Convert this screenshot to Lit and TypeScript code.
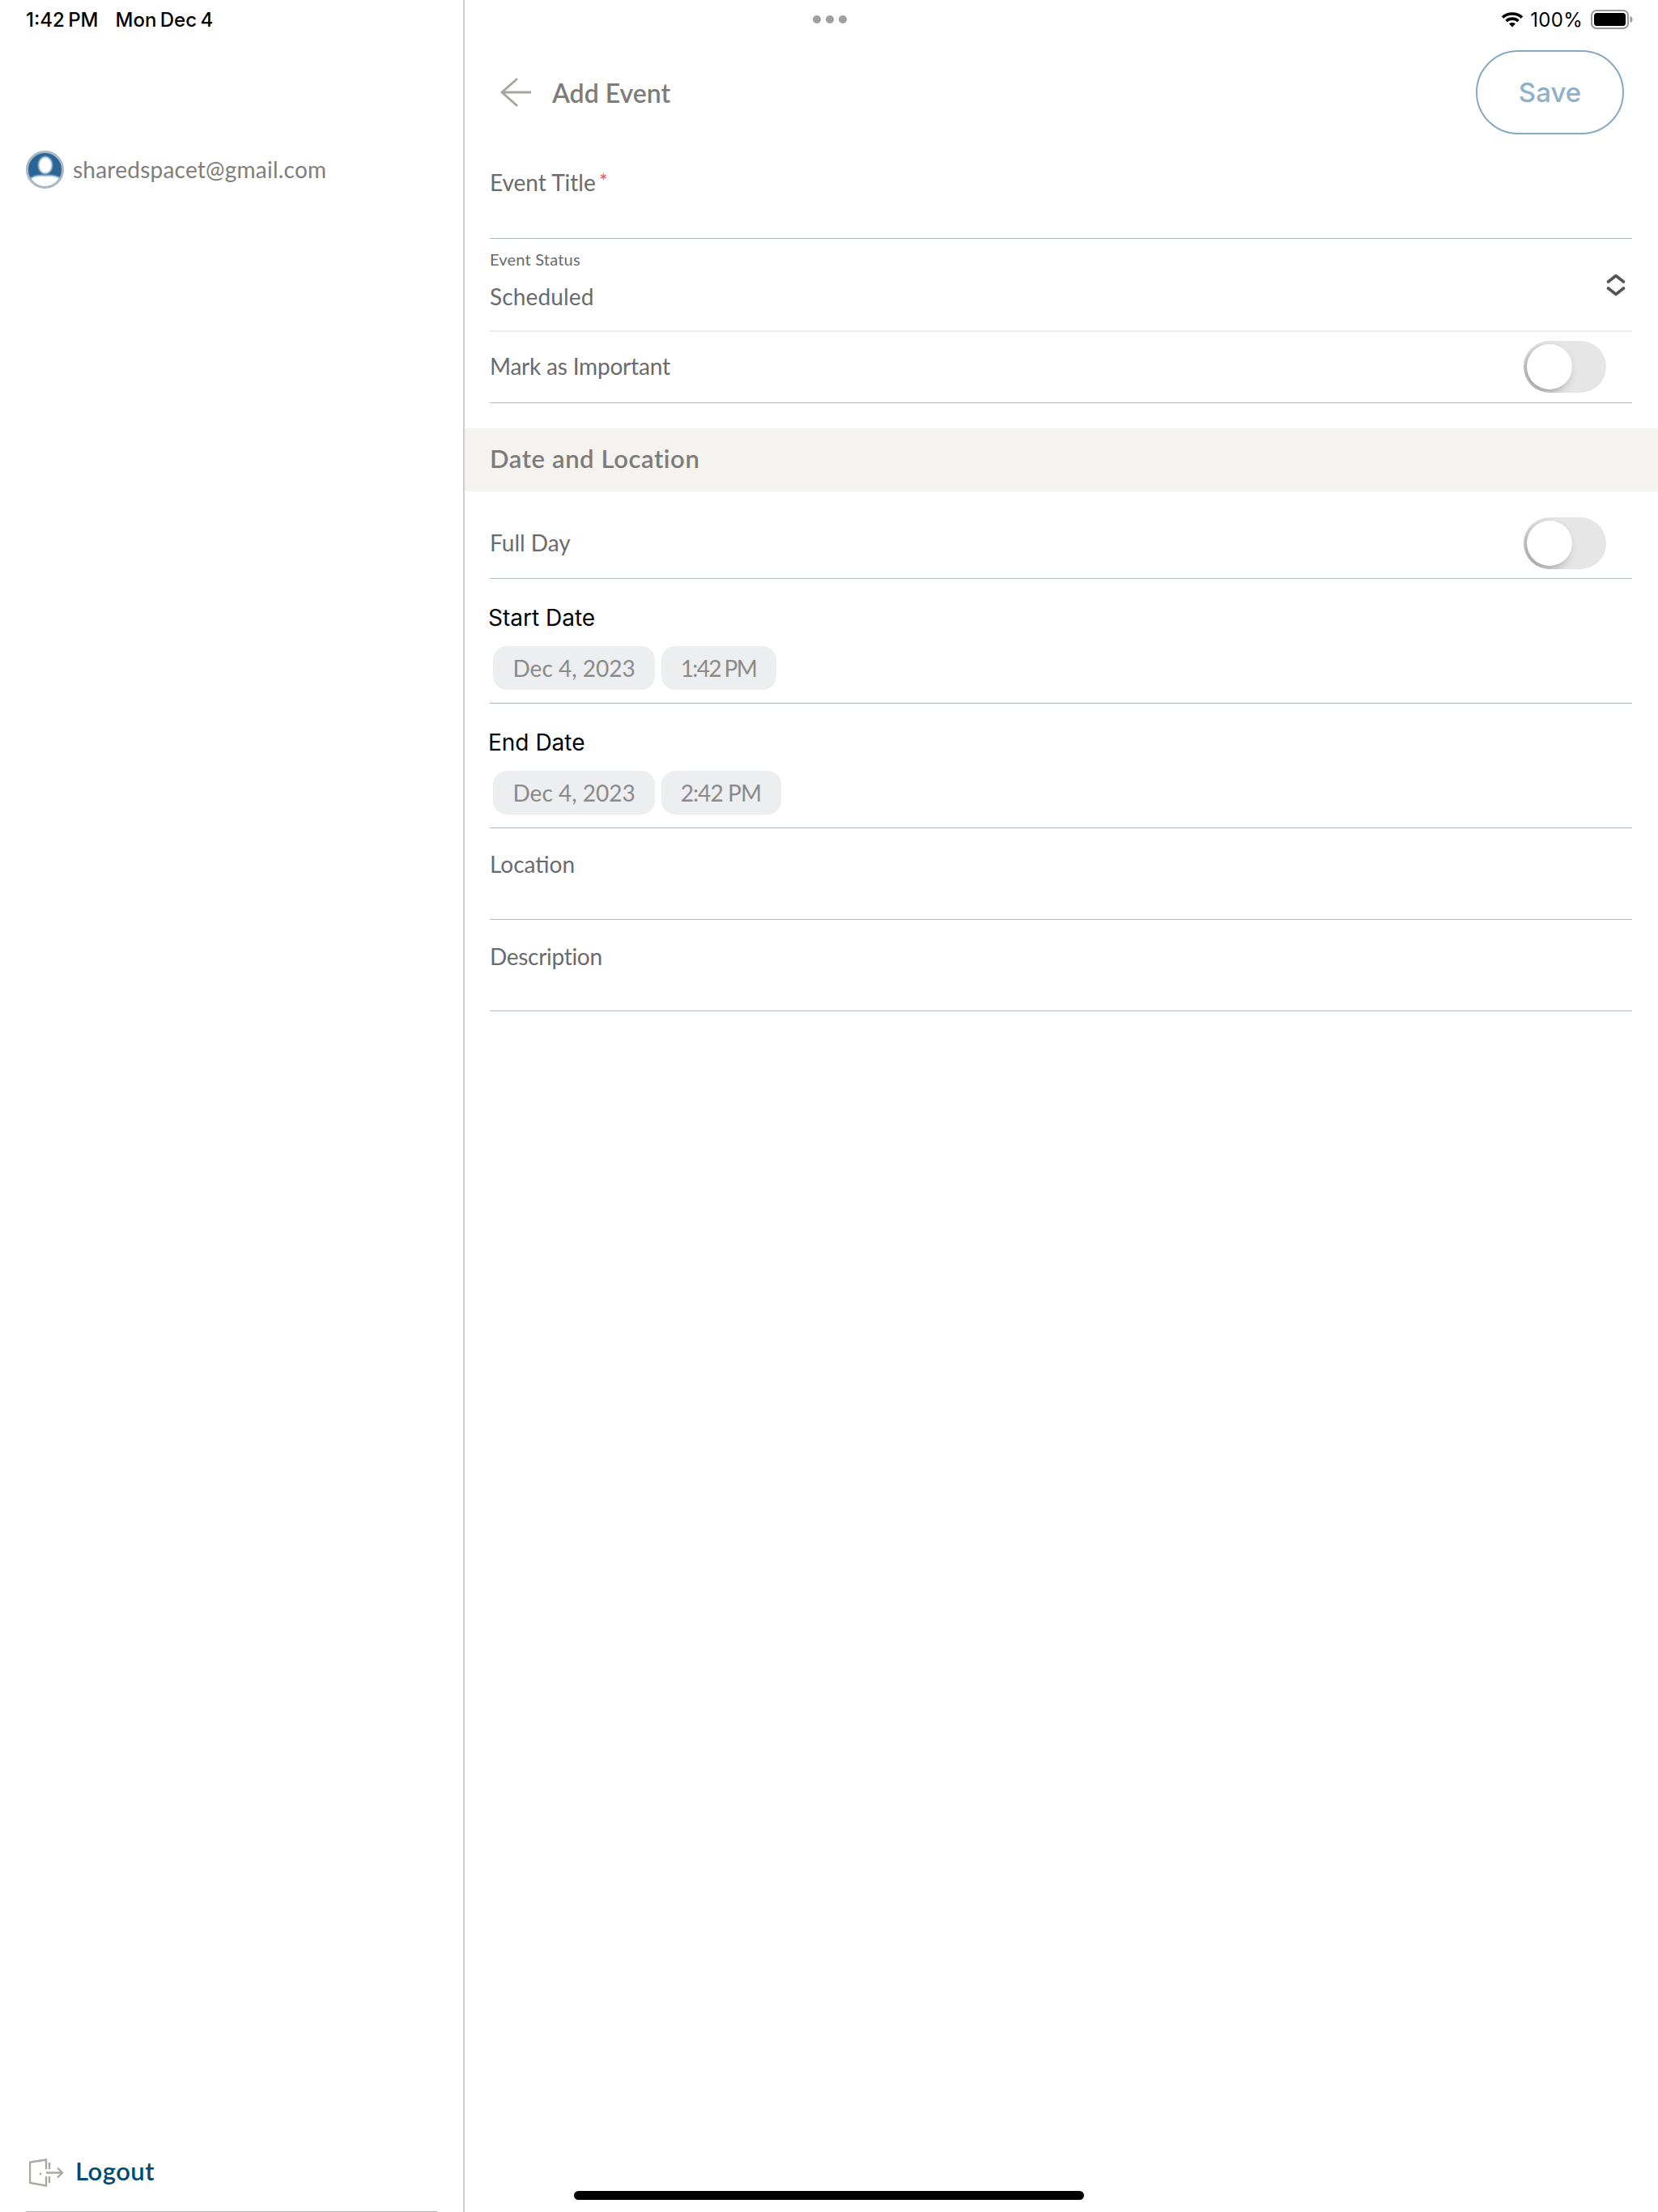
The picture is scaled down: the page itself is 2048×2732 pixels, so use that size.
import { LitElement, html, css } from "lit";
import { customElement } from "lit/decorators.js";

@customElement("app-root")
export class AppRoot extends LitElement {
  static styles = css`
    :host { display: block; width: 2048px; height: 2732px; background: #fff; font-family: Lato, "Liberation Sans", sans-serif; overflow: hidden; }
    .screen { position: relative; display: flex; width: 2048px; height: 2732px; }

    .status { position: absolute; left: 0; top: 0; width: 2048px; height: 48px; display: grid; grid-template-columns: 1fr auto 1fr; align-items: center; padding: 0 31px 0 32px; box-sizing: border-box; font-family: Inter, sans-serif; font-size: 24px; font-weight: 500; color: #000; }
    .st-left { display: flex; gap: 21px; word-spacing: -2px; }
    .dots { display: flex; gap: 6px; }
    .dots span { width: 10px; height: 10px; border-radius: 50%; background: #a0a0a0; }
    .st-right { display: flex; justify-content: flex-end; align-items: center; gap: 8px; }
    .pct { font-weight: 400; margin-right: 2px; letter-spacing: .3px; }

    .side { width: 574px; height: 100%; box-sizing: border-box; border-right: 2px solid #cfcfcf; padding: 186px 32px 0; display: flex; flex-direction: column; }
    .profile { display: flex; align-items: center; gap: 11px; color: #7f7e7a; font-size: 28px; letter-spacing: .23px; }
    .profile span { padding-bottom: 2px; }
    .spacer { flex: 1; }
    .logout { display: flex; align-items: center; gap: 14px; padding-left: 4px; color: #004b73; font-size: 31px; font-weight: 600; height: 34px; letter-spacing: .5px; }
    .logout span { padding-bottom: 4px; }
    .side-line { height: 1px; background: #b3b3b3; margin-top: 31px; }

    .main { flex: 1; padding-top: 62px; display: flex; flex-direction: column; font-size: 28px; color: #6b6b6b; }
    .head { height: 104px; display: flex; align-items: center; padding: 0 42px 0 44px; }
    .title { margin-left: 26px; flex: 1; font-size: 32px; font-weight: 600; color: #7d7c78; }
    .save { width: 183px; height: 104px; box-sizing: border-box; border: 2px solid #86a9c2; border-radius: 52px; display: flex; align-items: center; justify-content: center; font-family: Inter, sans-serif; font-size: 33px; font-weight: 500; color: #8fb0c8; }

    .field { margin: 0 32px 0 31px; border-bottom: 1px solid #b3bac0; box-sizing: border-box; line-height: 36px; display: flex; flex-direction: column; }
    .f-title { height: 129px; padding-top: 39px; }
    .req { color: #f0476e; font-size: 25px; vertical-align: 3px; margin-left: -3px; }
    .f-status { height: 115px; padding-top: 15px; position: relative; border-bottom: 2px solid #efede8; letter-spacing: .15px; }
    .small { font-size: 20px; line-height: 20px; margin-bottom: 18px; letter-spacing: .2px; }
    .chev { position: absolute; right: 8px; top: 43px; }
    .f-toggle { flex-direction: row; align-items: center; justify-content: space-between; padding-right: 32px; }
    .f-toggle > div:first-child { padding-bottom: 3px; }
    .mark { height: 88px; padding-bottom: 1px; letter-spacing: -.2px; }
    .full { height: 108px; padding-top: 21px; }
    .toggle { width: 102px; height: 64px; border-radius: 32px; background: #e6e6e6; overflow: hidden; padding: 4px; box-sizing: border-box; }
    .knob { width: 56px; height: 56px; border-radius: 50%; background: #fff; box-shadow: -5px 5px 12px rgba(0,0,0,.3); }

    .band { margin-top: 31px; height: 78px; background: #f4f3f0; display: flex; align-items: center; padding: 0 0 4px 31px; box-sizing: border-box; font-size: 31px; font-weight: 600; letter-spacing: .6px; color: #7d7c78; }

    .date { height: 154px; padding-top: 30px; }
    .date-label { font-family: Inter, sans-serif; font-size: 28px; color: #000; line-height: 36px; margin-left: -2px; }
    .pills { display: flex; gap: 8px; margin: 17px 0 0 4px; }
    .pill { height: 54px; padding: 0 24.5px; border-radius: 17px; background: #edeef0; display: flex; align-items: center; color: #8a8a88; font-size: 28px; }
    .pill.time { padding: 0 24.5px 0 23.5px; letter-spacing: -.9px; }
    .pill.first { word-spacing: -1px; letter-spacing: -1.6px; }

    .text { height: 113px; padding-top: 26px; }
    .text.d { padding-top: 27px; letter-spacing: -.3px; }

    .home { position: absolute; left: 709px; top: 2706px; width: 630px; height: 11px; border-radius: 6px; background: #000; }
  `;

  private toggle() {
    return html`<div class="toggle"><div class="knob"></div></div>`;
  }

  render() {
    return html`
      <div class="screen">
        <aside class="side">
          <div class="profile">
            <svg width="47" height="47" viewBox="0 0 47 47">
              <defs>
                <clipPath id="av"><circle cx="23.5" cy="23.5" r="20.5"></circle></clipPath>
                <filter id="bl" x="-20%" y="-20%" width="140%" height="140%"><feGaussianBlur stdDeviation="0.8"></feGaussianBlur></filter>
              </defs>
              <circle cx="23.5" cy="23.5" r="22" fill="#2b6496" stroke="#a9b8c2" stroke-width="3"></circle>
              <g clip-path="url(#av)">
                <g filter="url(#bl)" fill="#fff">
                  <ellipse cx="24" cy="18" rx="8.5" ry="10.5"></ellipse>
                  <path d="M3 47 V37 C8 31 15 30 24 31 C33 30 40 31 45 37 V47 Z"></path>
                </g>
              </g>
            </svg>
            <span>sharedspacet@gmail.com</span>
          </div>
          <div class="spacer"></div>
          <div class="logout">
            <svg width="43" height="35" viewBox="0 0 43 35" fill="none" stroke="#a9a9a4" stroke-width="2.4">
              <path d="M21 13 V1.5 L1 4.5 V30 L21 33.5 V22"></path>
              <path d="M25 13 V5 M25 22 V30"></path>
              <path d="M21 17.5 H41 M35 11.5 L41 17.5 L35 23.5"></path>
              <circle cx="14" cy="19" r="1.4" fill="#a9a9a4" stroke="none"></circle>
            </svg>
            <span>Logout</span>
          </div>
          <div class="side-line"></div>
        </aside>

        <main class="main">
          <div class="head">
            <svg width="38" height="36" viewBox="0 0 38 36" fill="none" stroke="#a5a5a0" stroke-width="3" stroke-linecap="round" stroke-linejoin="round">
              <path d="M37 18 H2 M20 2 L2 18 L20 34"></path>
            </svg>
            <div class="title">Add Event</div>
            <div class="save">Save</div>
          </div>

          <div class="field f-title"><div>Event Title <span class="req">*</span></div></div>

          <div class="field f-status">
            <div class="small">Event Status</div>
            <div>Scheduled</div>
            <svg class="chev" width="24" height="28" viewBox="0 0 24 28" fill="none" stroke="#555" stroke-width="3.6" stroke-linecap="round" stroke-linejoin="round">
              <path d="M2.5 10 L12 2.5 L21.5 10 M2.5 18 L12 25.5 L21.5 18"></path>
            </svg>
          </div>

          <div class="field f-toggle mark"><div>Mark as Important</div>${this.toggle()}</div>

          <div class="band">Date and Location</div>

          <div class="field f-toggle full"><div>Full Day</div>${this.toggle()}</div>

          <div class="field date">
            <div class="date-label">Start Date</div>
            <div class="pills"><div class="pill">Dec 4, 2023</div><div class="pill time first">1:42 PM</div></div>
          </div>
          <div class="field date">
            <div class="date-label">End Date</div>
            <div class="pills"><div class="pill">Dec 4, 2023</div><div class="pill time">2:42 PM</div></div>
          </div>

          <div class="field text"><div>Location</div></div>
          <div class="field text d"><div>Description</div></div>
        </main>

        <div class="status">
          <div class="st-left"><span>1:42 PM</span><span>Mon Dec 4</span></div>
          <div class="dots"><span></span><span></span><span></span></div>
          <div class="st-right">
            <svg width="28" height="20" viewBox="0 0 28 20" fill="none" stroke="#000" stroke-width="3.6">
              <path d="M2 7.5 C8.5 1.5 19.5 1.5 26 7.5"></path>
              <path d="M6.5 12 C10.5 8.2 17.5 8.2 21.5 12"></path>
              <path d="M10 15.2 L14 19.5 L18 15.2 C15.5 13.2 12.5 13.2 10 15.2 Z" fill="#000" stroke="none"></path>
            </svg>
            <span class="pct">100%</span>
            <svg width="52" height="24" viewBox="0 0 52 24">
              <rect x="1" y="1" width="45" height="22" rx="6" fill="#fff" stroke="#999" stroke-width="2"></rect>
              <rect x="4" y="4" width="39" height="16" rx="3.5" fill="#000"></rect>
              <path d="M48.5 8 C50.5 8.5 51.5 10 51.5 12 C51.5 14 50.5 15.5 48.5 16 Z" fill="#999"></path>
            </svg>
          </div>
        </div>

        <div class="home"></div>
      </div>
    `;
  }
}
